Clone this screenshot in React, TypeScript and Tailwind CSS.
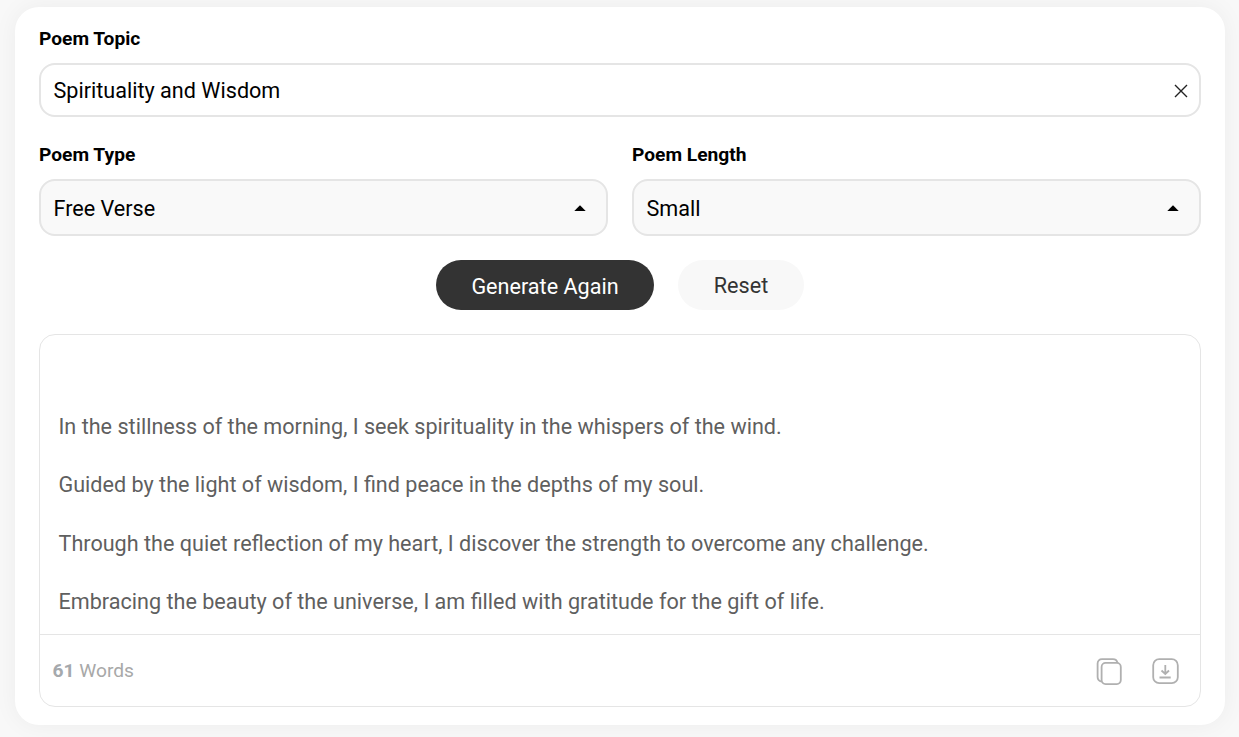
import React from "react";

function Caret() {
  return (
    <svg width="12" height="6" viewBox="0 0 12 6" className="shrink-0">
      <path d="M0.3 6 L6 0.3 L11.7 6 Z" fill="#000" />
    </svg>
  );
}

function Select({ label, value }: { label: string; value: string }) {
  return (
    <div className="flex flex-col flex-1 min-w-0">
      <label className="text-[19.2px] leading-[24px] font-bold text-black h-[24px] mb-[12px] mt-[1px]">{label}</label>
      <div className="h-[57px] rounded-[16px] border-2 border-[#e5e5e5] bg-[#f9f9f9] flex items-center justify-between pl-[12.5px] pr-[20px]">
        <span className="text-[21.6px] leading-[33px] pt-[1px] text-black">{value}</span>
        <Caret />
      </div>
    </div>
  );
}

const lines = [
  "In the stillness of the morning, I seek spirituality in the whispers of the wind.",
  "Guided by the light of wisdom, I find peace in the depths of my soul.",
  "Through the quiet reflection of my heart, I discover the strength to overcome any challenge.",
  "Embracing the beauty of the universe, I am filled with gratitude for the gift of life.",
];

export default function App() {
  return (
    <div className="h-[737px] overflow-hidden bg-[#f8f8f8] pl-[15px] pr-[14px] pt-[7px] font-['Roboto',sans-serif]">
      <div className="h-[718px] rounded-[24px] bg-white px-[24px] pt-[20px] shadow-[0_0_24px_rgba(0,0,0,0.05)]">
        <label className="block text-[19.2px] leading-[24px] font-bold text-black mb-[12px]">Poem Topic</label>
        <div className="h-[54px] rounded-[16px] border-2 border-[#e5e5e5] bg-white flex items-center justify-between pl-[12.5px] pr-[11px]">
          <span className="text-[21.6px] leading-[33px] pt-[1px] text-black">Spirituality and Wisdom</span>
          <svg width="14" height="14" viewBox="0 0 14 14" fill="none" stroke="#222" strokeWidth="1.4" className="mt-[1px]">
            <path d="M1 1 L13 13 M13 1 L1 13" />
          </svg>
        </div>

        <div className="flex gap-[24px] mt-[25px]">
          <Select label="Poem Type" value="Free Verse" />
          <Select label="Poem Length" value="Small" />
        </div>

        <div className="flex justify-center gap-[24px] mt-[24px]">
          <button className="w-[218px] h-[50px] rounded-full bg-[#333333] text-white text-[21.6px] leading-[33px] pt-[2px]">Generate Again</button>
          <button className="w-[126px] h-[50px] rounded-full bg-[#f8f8f8] text-[#333333] text-[21.6px] leading-[33px] pt-[1px]">Reset</button>
        </div>

        <div className="mt-[24px] h-[373px] rounded-[16px] border border-[#e5e5e5] flex flex-col">
          <div className="flex-1 pl-[18.5px] pt-[75px] flex flex-col gap-[25px]">
            {lines.map((l) => (
              <p key={l} className="text-[21.6px] leading-[33.4px] text-[#5f5f5f]">{l}</p>
            ))}
          </div>
          <div className="h-[72px] border-t border-[#e5e5e5] flex items-center justify-between pl-[12.5px] pr-[21px]">
            <span className="text-[19.2px] leading-[28px] pt-[1px] text-[#a8a8a8]"><span className="font-bold text-[#a5a9ad]">61</span> Words</span>
            <div className="flex items-center gap-[30px] pt-[2px]">
              <svg width="26" height="27" viewBox="0 0 26 27" fill="none" stroke="#b0b0b0" strokeWidth="1.8">
                <rect x="5.6" y="4.9" width="19.2" height="21.2" rx="4" />
                <path d="M5.6 23.5 C3 23 1.6 21.5 1.6 19 V5.5 C1.6 2.8 3.4 1.2 6 1.2 H17 C19.5 1.2 21 2.6 21.5 4.9" />
              </svg>
              <svg width="27" height="27" viewBox="0 0 27 27" fill="none" stroke="#b0b0b0" strokeWidth="1.8">
                <rect x="1.2" y="1.2" width="24.6" height="24" rx="6" />
                <path d="M13.3 7 V15.8 M9.5 12.5 L13.3 16 L17 12.5 M7.5 19.5 H18.7" />
              </svg>
            </div>
          </div>
        </div>
      </div>
    </div>
  );
}
